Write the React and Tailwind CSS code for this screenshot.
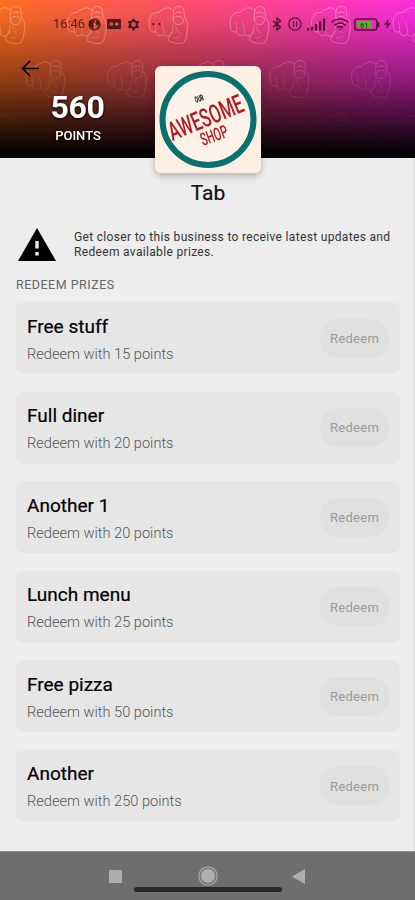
import React from 'react';

const prizes = [
  { name: 'Free stuff', points: 15 },
  { name: 'Full diner', points: 20 },
  { name: 'Another 1', points: 20 },
  { name: 'Lunch menu', points: 25 },
  { name: 'Free pizza', points: 50 },
  { name: 'Another', points: 250 },
];

const fists = [
  [-15, 5], [66.5, 5], [148, 5], [229, 5], [310.5, 5], [392, 5],
  [25, 59], [106.5, 59], [188, 59], [269, 59], [350.5, 59],
  [-15, 113], [66.5, 113], [148, 113], [229, 113], [310.5, 113], [392, 113],
];

const HeaderPattern = () => (
  <svg className="absolute inset-0" width="415" height="158" viewBox="0 0 415 158">
    <defs>
      <g id="fist" fill="none" stroke="#fff" strokeWidth="0.9" strokeLinejoin="round" strokeLinecap="round">
        <path d="M25.500 6C26 2.500 28.500 1.500 31 1.500C34.500 1.500 36 4 36 7L36.500 12.500C39.500 16 40.500 20 39.500 25C38.500 30 38.500 34 36 37.500C33 39 30 38.500 27.500 38C24.500 37.500 21 37 20.500 34.500C20 33 20.500 31.500 22 31" />
        <path d="M25.500 5.500C23 2.500 19 2 16.500 4C14.500 4.500 12 5 11 7.500C7.500 7 3.500 8.500 3 11.500C0.500 13.500 1 19 1.500 22C2 26 4 28 7.500 26.500C9 31.500 13 31.500 15.500 29.500C18 31.500 21 31.500 22.500 29.500L25 26.500" />
        <path d="M25.500 6C25 9 25.300 12 25.300 15C25.300 18 27.500 19.500 30.500 19.500C33.500 19.500 35.500 17.500 35.500 15C35.500 12.500 33 11.500 30.500 11.500C28 11.500 25.500 12.500 25.300 15M27.500 8C28.500 6.500 33 6.500 34 8" />
        <path d="M7.500 26.500C8.500 23 7 20 6.500 17M15.500 29.500C16.500 25 15 21 13.500 17.500M25 20C25 23 24.500 27 22.500 29.500M26 32.500C28 34 31 33 32 31M28 21.500C28 24.500 29 27 32 28" strokeWidth="0.6" />
      </g>
      <linearGradient id="fade" x1="0" y1="0" x2="0" y2="1">
        <stop offset="0" stopColor="#fff" stopOpacity="0.42" />
        <stop offset="0.25" stopColor="#fff" stopOpacity="0.34" />
        <stop offset="0.45" stopColor="#fff" stopOpacity="0.17" />
        <stop offset="0.7" stopColor="#fff" stopOpacity="0.07" />
        <stop offset="0.85" stopColor="#fff" stopOpacity="0" />
      </linearGradient>
      <mask id="pattern-mask">
        <rect width="415" height="158" fill="url(#fade)" />
      </mask>
    </defs>
    <g mask="url(#pattern-mask)">
      {fists.map(([x, y]) => (
        <use key={`${x}-${y}`} href="#fist" x={x} y={y} />
      ))}
    </g>
  </svg>
);

const StatusBar = () => (
  <div className="relative flex h-12 items-center justify-between pl-[53px] pr-[24px] text-[#000000a8]">
    <div className="flex items-center">
      <span className="w-[35px] text-[13px] leading-4 tracking-[-0.1px]">16:46</span>
      <svg width="13" height="13" viewBox="0 0 13 13">
        <circle cx="6.500" cy="6.500" r="5.300" fill="none" stroke="currentColor" strokeWidth="1.600" />
        <path d="M1.500 3L6 2L7 4L5 6L6 8L5 11L2 8ZM8 3L11 4L11 7L9 8L7.500 6Z" fill="currentColor" />
      </svg>
      <svg className="ml-[6px]" width="14" height="10" viewBox="0 0 14 10">
        <path fillRule="evenodd" d="M1 0H13Q14 0 14 1V9Q14 10 13 10H1Q0 10 0 9V1Q0 0 1 0ZM2.500 3.500V6.500H6V3.500ZM8 3.500V6.500H11.500V3.500Z" fill="currentColor" />
      </svg>
      <svg className="ml-[6px]" width="13" height="13" viewBox="0 0 13 13" fill="none" stroke="currentColor">
        <circle cx="6.500" cy="6.500" r="3.400" strokeWidth="2" />
        <path d="M6.500 0.500V3M6.500 10V12.500M1.300 3.500L3.500 4.800M9.500 8.200L11.700 9.500M1.300 9.500L3.500 8.200M9.500 4.800L11.700 3.500" strokeWidth="2.200" />
      </svg>
      <svg className="ml-[12px]" width="10" height="4" viewBox="0 0 10 4" fill="currentColor">
        <circle cx="1.500" cy="2" r="1.200" />
        <circle cx="7.500" cy="2" r="1.200" />
      </svg>
    </div>
    <div className="flex items-center">
      <svg width="10" height="14" viewBox="0 0 10 14" fill="none" stroke="currentColor" strokeWidth="1.400">
        <path d="M1 4L8.500 10L5 13V1L8.500 4L1 10" />
      </svg>
      <svg className="ml-[6px]" width="14" height="14" viewBox="0 0 14 14" fill="none" stroke="currentColor" strokeWidth="1.200">
        <circle cx="7" cy="7" r="6.200" />
        <path d="M5.500 4.300V9.700M8.500 4.300V9.700" />
      </svg>
      <svg className="ml-[5px]" width="19" height="13" viewBox="0 0 19 13" fill="currentColor">
        <path d="M0 10H2.200V12.500H0ZM4 8.500H6.200V12.500H4ZM8 6H10.200V12.500H8ZM12 3.500H14.200V12.500H12ZM16 0.500H18.200V12.500H16Z" />
      </svg>
      <svg className="ml-[5px]" width="18" height="13" viewBox="0 0 18 13" fill="none" stroke="currentColor" strokeWidth="1.700">
        <path d="M0.800 4.500C5.500 -0.200 12.500 -0.200 17.200 4.500M3.500 7.300C6.700 4.200 11.300 4.200 14.500 7.300M6.200 9.800C8 8.300 10 8.300 11.800 9.800" />
        <path d="M7.500 11L9 12.800L10.500 11Z" fill="currentColor" stroke="none" />
      </svg>
      <svg className="ml-[5px]" width="26" height="13" viewBox="0 0 26 13">
        <rect x="0.800" y="1" width="22" height="11" rx="2.500" fill="none" stroke="currentColor" strokeWidth="1.500" />
        <rect x="3" y="3.200" width="14.500" height="6.800" fill="#4fb91c" />
        <path d="M23.500 4H25.300V9H23.500Z" fill="currentColor" />
        <text x="6" y="9.500" fontSize="7.500" fontWeight="700" fill="#24520f">61</text>
      </svg>
      <svg className="ml-[4px]" width="7" height="10" viewBox="0 0 7 10" fill="currentColor">
        <path d="M4.500 0L0 5.800H3L2.300 10L7 4.200H3.900Z" />
      </svg>
    </div>
  </div>
);

const Logo = () => (
  <div className="h-[107px] w-[106px] rounded-[6px] bg-[#fdf0e2] shadow-[0_3px_7px_rgba(0,0,0,0.25)]">
    <svg className="overflow-visible" width="106" height="107" viewBox="0 0 106 107">
      <circle cx="53" cy="53.500" r="45.500" fill="#fdf2e7" stroke="#08716f" strokeWidth="6" />
      <g fontFamily="Roboto, sans-serif" fill="#b5191f">
        <text transform="translate(17.500 75) rotate(-22.500)" fontSize="26" fontWeight="500" textLength="79" lengthAdjust="spacingAndGlyphs">AWESOME</text>
        <text transform="translate(48 80) rotate(-20)" fontSize="18" fontWeight="500" textLength="28" lengthAdjust="spacingAndGlyphs">SHOP</text>
        <text transform="translate(41 37) rotate(-20)" fontSize="9" fontWeight="900" fill="#222" textLength="9" lengthAdjust="spacingAndGlyphs">OUR</text>
      </g>
    </svg>
  </div>
);

const Header = () => (
  <header className="relative h-[158px] bg-[linear-gradient(to_bottom,transparent_0%,rgba(0,0,0,0.07)_12%,rgba(0,0,0,0.43)_50%,rgba(0,0,0,0.73)_75%,#000_98%),linear-gradient(to_right,#ff6f20_0%,#ff4c74_48%,#ff2de0_100%)]">
    <HeaderPattern />
    <StatusBar />
    <div className="relative flex">
      <div className="w-[155px]">
        <svg className="ml-[21px] mt-[12px]" width="19" height="17" viewBox="0 0 19 17" fill="none" stroke="#000" strokeWidth="1.700">
          <path d="M18 8.500H2M9 1L1.500 8.500L9 16" />
        </svg>
        <div className="mt-[11px] text-center text-[32px] font-bold leading-[38px] tracking-[-0.3px] text-white [text-shadow:0_1px_3px_#000]">560</div>
        <div className="mt-[2px] pl-px text-center text-[13px] font-medium leading-4 text-white [text-shadow:0_1px_3px_#000]">POINTS</div>
      </div>
      <div className="mt-[18px] h-[107px]">
        <Logo />
      </div>
    </div>
  </header>
);

const PrizeCard = ({ name, points }) => (
  <div className="flex h-[72px] items-center justify-between rounded-[8px] bg-[#e6e6e6] pl-[11px] pr-[11px]">
    <div>
      <div className="mt-[2px] text-[19px] leading-6 text-black [-webkit-text-stroke:0.2px_#000]">{name}</div>
      <div className="mt-[5px] text-[14.600px] font-light leading-5 text-[#555]">Redeem with {points} points</div>
    </div>
    <button className="h-[39px] w-[69px] rounded-[18px] bg-[#e0e0e0] pt-px text-[13px] tracking-[0.3px] text-[#999]">Redeem</button>
  </div>
);

const NavBar = () => (
  <nav className="relative h-[49px] border-t border-[#888] bg-[#6e6e6e]">
    <div className="flex h-[48px] items-center pl-[109px]">
      <div className="h-[13px] w-[13px] bg-[#adadad]" />
      <svg className="ml-[76px]" width="20" height="20" viewBox="0 0 20 20">
        <circle cx="10" cy="10" r="9.200" fill="none" stroke="#a5a5a5" strokeWidth="1.300" />
        <circle cx="10" cy="10" r="7" fill="#b0b0b0" stroke="#999" strokeWidth="1" />
      </svg>
      <svg className="ml-[74px]" width="13" height="15" viewBox="0 0 13 15">
        <path d="M13 0V15L0 7.500Z" fill="#adadad" />
      </svg>
    </div>
    <div className="absolute left-[134px] top-[35px] h-[5px] w-[148px] rounded-full bg-[#292929]" />
  </nav>
);

const App = () => {
  return (
    <div className="flex h-[900px] w-[415px] flex-col overflow-hidden bg-[#ededed] font-[Roboto,sans-serif]">
      <Header />
      <main className="flex-1 border-r border-[#dcdcdc] pl-4 pr-[14px]">
        <h1 className="mt-[21px] text-center text-[21px] leading-7 text-[#111] [-webkit-text-stroke:0.2px_#111]">Tab</h1>
        <div className="mt-[17px] flex h-[40px] items-center">
          <svg className="ml-[2px]" width="38" height="33" viewBox="0 0 38 33">
            <path fillRule="evenodd" d="M19 0L38 33H0ZM17.300 13V20.500H20.700V13ZM17.300 24V27.500H20.700V24Z" />
          </svg>
          <p className="ml-[18px] mt-[2px] whitespace-nowrap text-[12px] leading-[15px] tracking-[0.33px] text-[#333]">
            Get closer to this business to receive latest updates and
            <br />
            Redeem available prizes.
          </p>
        </div>
        <h2 className="mt-[13px] text-[12.500px] leading-4 tracking-[0.5px] text-[#666]">REDEEM PRIZES</h2>
        <div className="mt-[9px] flex flex-col gap-[17.600px]">
          {prizes.map((prize) => (
            <PrizeCard key={prize.name} name={prize.name} points={prize.points} />
          ))}
        </div>
      </main>
      <NavBar />
    </div>
  );
};

export default App;
